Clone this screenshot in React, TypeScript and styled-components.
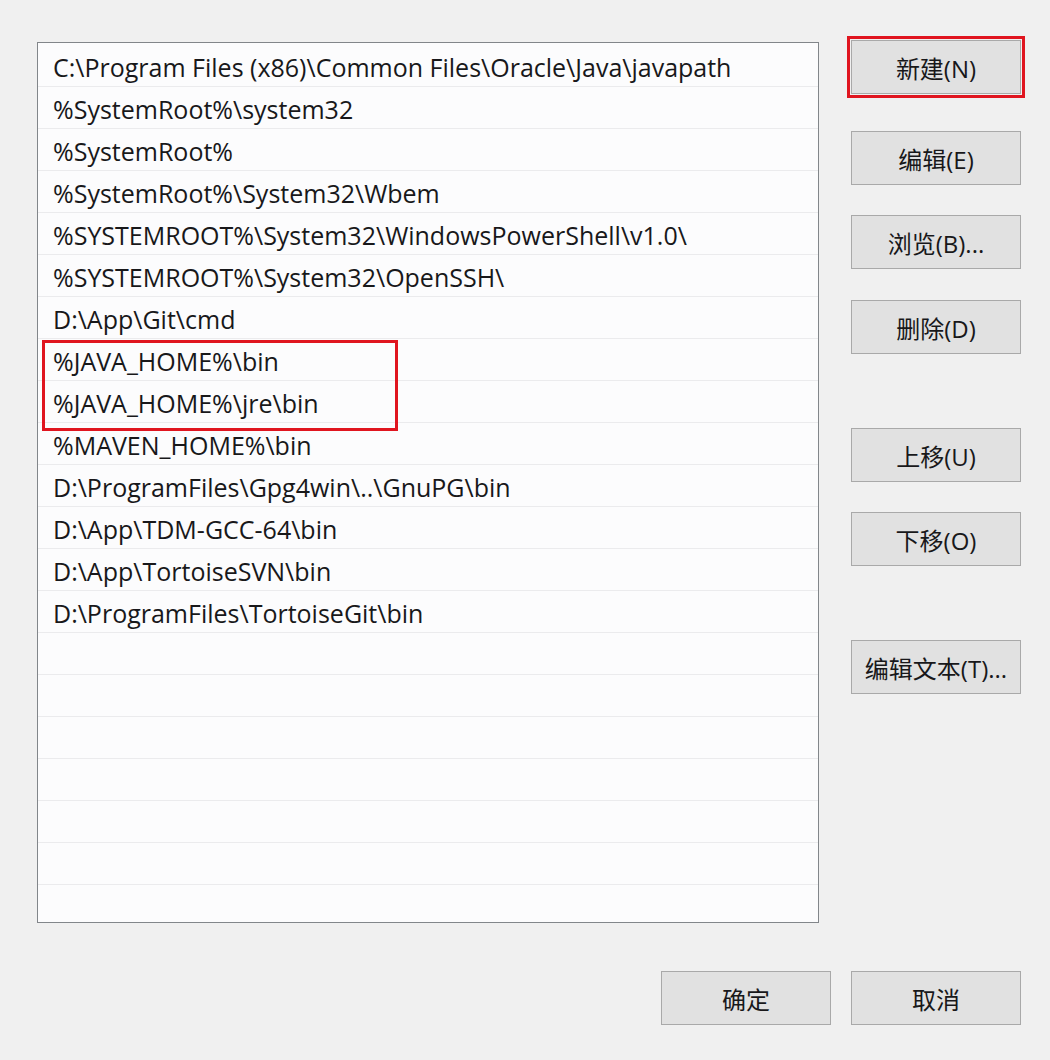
import React from "react";
import styled, { createGlobalStyle } from "styled-components";

const Global = createGlobalStyle`
  html, body { margin: 0; padding: 0; background: #f0f0f0; }
  body { font-family: "Open Sans", "Noto Sans CJK SC", sans-serif; }
`;

const Window = styled.div`
  width: 1050px;
  height: 1060px;
  box-sizing: border-box;
  background: #f0f0f0;
  padding: 42px 29px 0 37px;
  display: flex;
  flex-direction: column;
`;

const Top = styled.div`
  display: flex;
  gap: 32px;
`;

const ListBox = styled.div`
  position: relative;
  width: 782px;
  height: 881px;
  box-sizing: border-box;
  border: 1.5px solid #82868a;
  background: #fcfcfd;
  padding-top: 2px;
  overflow: hidden;
  display: flex;
  flex-direction: column;
`;

const Row = styled.div`
  height: 42px;
  flex: none;
  box-sizing: border-box;
  border-bottom: 1.5px solid #ebebed;
  padding-left: 15px;
  padding-top: 2px;
  display: flex;
  align-items: center;
  font-family: "Open Sans", "Noto Sans CJK SC", sans-serif;
  font-size: 25px;
  color: #18181a;
  white-space: nowrap;
`;

const Annotation = styled.div`
  position: absolute;
  left: 4px;
  top: 297px;
  width: 356px;
  height: 91px;
  box-sizing: border-box;
  border: 3px solid #e0151f;
  pointer-events: none;
`;

const Side = styled.div`
  width: 170px;
  display: flex;
  flex-direction: column;
`;

const Button = styled.button<{ $gap?: number; $marked?: boolean }>`
  width: 170px;
  height: 54px;
  flex: none;
  margin-top: ${(p) => p.$gap ?? 0}px;
  box-sizing: border-box;
  background: #e1e1e1;
  border: 1.5px solid #a9a9a9;
  border-radius: 0;
  font-family: "Open Sans", "Noto Sans CJK SC", sans-serif;
  font-size: 24px;
  color: #18181a;
  padding: 0;
  display: flex;
  align-items: center;
  justify-content: center;
  outline: ${(p) => (p.$marked ? "3px solid #e0151f" : "none")};
  outline-offset: 1px;
`;

const Bottom = styled.div`
  display: flex;
  justify-content: flex-end;
  gap: 20px;
  margin-top: 48px;
`;

const paths = [
  "C:\\Program Files (x86)\\Common Files\\Oracle\\Java\\javapath",
  "%SystemRoot%\\system32",
  "%SystemRoot%",
  "%SystemRoot%\\System32\\Wbem",
  "%SYSTEMROOT%\\System32\\WindowsPowerShell\\v1.0\\",
  "%SYSTEMROOT%\\System32\\OpenSSH\\",
  "D:\\App\\Git\\cmd",
  "%JAVA_HOME%\\bin",
  "%JAVA_HOME%\\jre\\bin",
  "%MAVEN_HOME%\\bin",
  "D:\\ProgramFiles\\Gpg4win\\..\\GnuPG\\bin",
  "D:\\App\\TDM-GCC-64\\bin",
  "D:\\App\\TortoiseSVN\\bin",
  "D:\\ProgramFiles\\TortoiseGit\\bin",
];

const rows = [...paths, ...Array(8).fill("")];

export default function App() {
  return (
    <>
      <Global />
      <Window>
        <Top>
          <ListBox>
            {rows.map((p, i) => (
              <Row key={i}>{p}</Row>
            ))}
            <Annotation />
          </ListBox>
          <Side>
            <Button $marked $gap={-2}>新建(N)</Button>
            <Button $gap={37}>编辑(E)</Button>
            <Button $gap={30}>浏览(B)...</Button>
            <Button $gap={31}>删除(D)</Button>
            <Button $gap={74}>上移(U)</Button>
            <Button $gap={30}>下移(O)</Button>
            <Button $gap={74}>编辑文本(T)...</Button>
          </Side>
        </Top>
        <Bottom>
          <Button>确定</Button>
          <Button>取消</Button>
        </Bottom>
      </Window>
    </>
  );
}
